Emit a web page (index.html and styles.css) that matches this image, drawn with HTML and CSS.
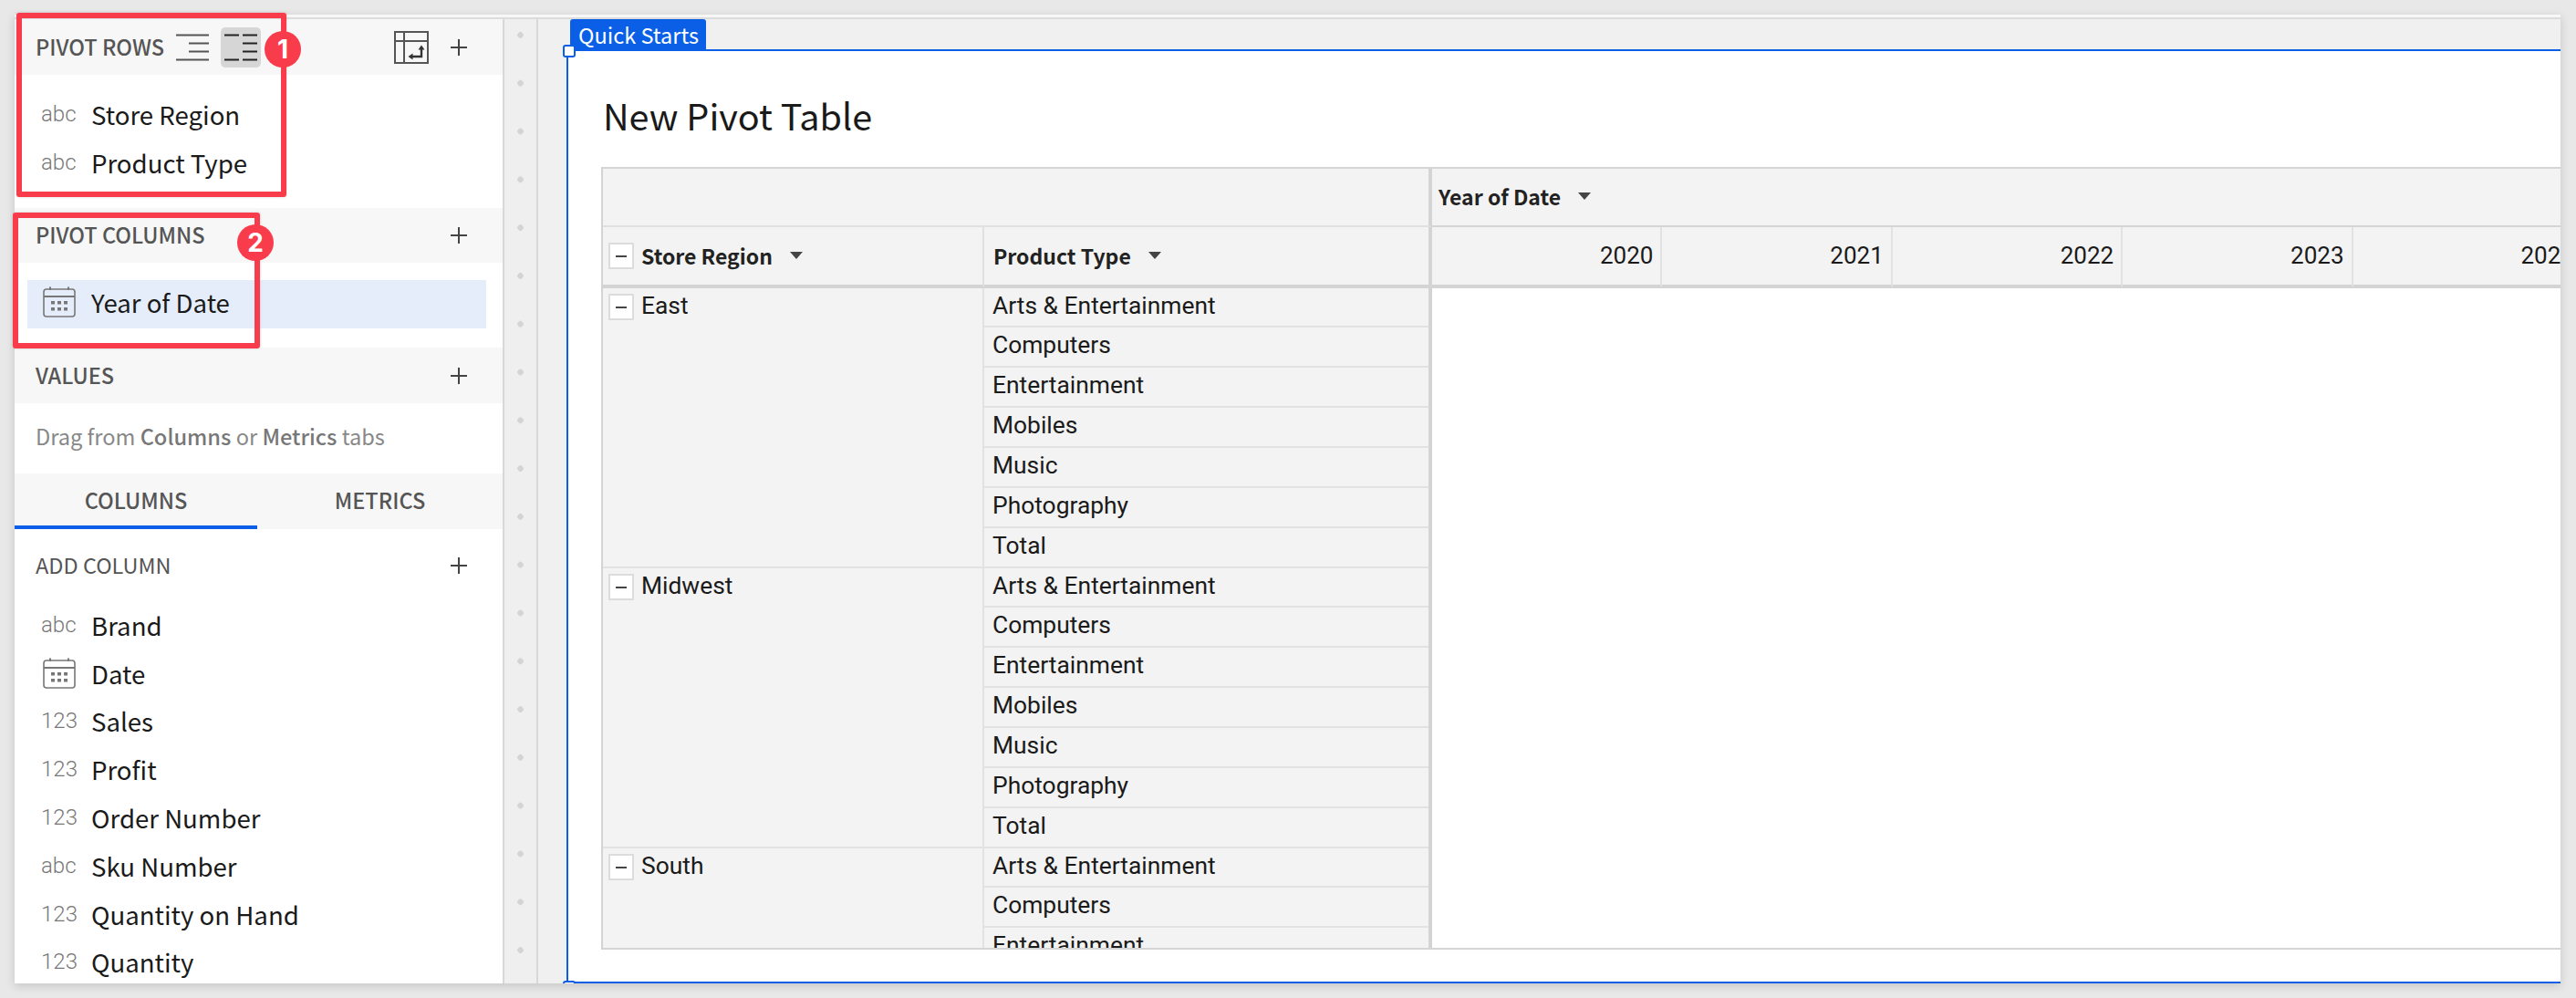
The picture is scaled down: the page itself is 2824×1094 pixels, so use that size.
FILE: index.html
```html
<!DOCTYPE html>
<html lang="en">
<head>
    <meta charset="UTF-8">
    <title>New Pivot Table</title>
    <link rel="stylesheet" href="styles.css">
</head>
<body>
    <div class="app">
        <div class="workspace">
            <aside class="panel">
                <div class="section-head">
                    <span class="section-title">PIVOT ROWS</span>
                    <svg class="layout-icon" width="36" height="30" viewBox="0 0 36 30"><path d="M0 1.500H36M14 10.500H36M14 19.500H36M0 28.500H36" stroke="#555" stroke-width="2"/></svg>
                    <span class="layout-btn">
                        <svg width="36" height="30" viewBox="0 0 36 30"><path d="M0 1.500H16M20 1.500H36M20 10.500H36M20 19.500H36M0 28.500H16M20 28.500H36" stroke="#222" stroke-width="2"/></svg>
                    </span>
                    <svg class="table-icon" width="38" height="36" viewBox="0 0 38 36"><path d="M1 1H37V35H1ZM1 11H37M11 1V35" fill="none" stroke="#555" stroke-width="2"/><path d="M30 19V28H19" fill="none" stroke="#333" stroke-width="2.400"/><path d="M30 15.500l-3.500 5h7ZM15.500 28l5-3.500v7Z" fill="#333"/></svg>
                    <svg class="plus" width="18" height="18" viewBox="0 0 18 18"><path d="M9 0V18M0 9H18" stroke="#444" stroke-width="2"/></svg>
                </div>
                <div class="section-body">
                    <div class="field"><span class="type">abc</span>Store Region</div>
                    <div class="field"><span class="type">abc</span>Product Type</div>
                </div>
                <div class="section-head head-b">
                    <span class="section-title">PIVOT COLUMNS</span>
                    <svg class="plus" width="18" height="18" viewBox="0 0 18 18"><path d="M9 0V18M0 9H18" stroke="#444" stroke-width="2"/></svg>
                </div>
                <div class="section-body">
                    <div class="field field-selected">
                        <svg class="type-cal" width="36" height="34" viewBox="0 0 36 34"><use href="#cal"/></svg>Year of Date
                    </div>
                </div>
                <div class="section-head">
                    <span class="section-title">VALUES</span>
                    <svg class="plus" width="18" height="18" viewBox="0 0 18 18"><path d="M9 0V18M0 9H18" stroke="#444" stroke-width="2"/></svg>
                </div>
                <div class="hint">Drag from <b>Columns</b> or <b>Metrics</b> tabs</div>
                <div class="tabs">
                    <div class="tab tab-active">COLUMNS</div>
                    <div class="tab">METRICS</div>
                </div>
                <div class="add-column">
                    <span class="add-label">ADD COLUMN</span>
                    <svg class="plus" width="18" height="18" viewBox="0 0 18 18"><path d="M9 0V18M0 9H18" stroke="#444" stroke-width="2"/></svg>
                </div>
                <div class="field-list">
                    <div class="field"><span class="type">abc</span>Brand</div>
                    <div class="field"><svg class="type-cal" width="36" height="34" viewBox="0 0 36 34"><use href="#cal"/></svg>Date</div>
                    <div class="field"><span class="type">123</span>Sales</div>
                    <div class="field"><span class="type">123</span>Profit</div>
                    <div class="field"><span class="type">123</span>Order Number</div>
                    <div class="field"><span class="type">abc</span>Sku Number</div>
                    <div class="field"><span class="type">123</span>Quantity on Hand</div>
                    <div class="field"><span class="type">123</span>Quantity</div>
                </div>
            </aside>
            <div class="ruler"></div>
            <main class="canvas">
                <div class="tag">Quick Starts</div>
                <section class="widget">
                    <span class="handle handle-top"></span>
                    <span class="handle handle-bottom"></span>
                    <h1 class="widget-title">New Pivot Table</h1>
                    <div class="pivot">
                        <div class="pivot-head">
                            <div class="cell corner"></div>
                            <div class="cell year-title">Year of Date<i class="caret"></i></div>
                            <div class="cell head-name region-col"><span class="toggle"></span>Store Region<i class="caret"></i></div>
                            <div class="cell head-name type-col">Product Type<i class="caret"></i></div>
                            <div class="cell year">2020</div>
                            <div class="cell year">2021</div>
                            <div class="cell year">2022</div>
                            <div class="cell year">2023</div>
                            <div class="cell year">2024</div>
                        </div>
                        <div class="pivot-body">
                            <div class="row-heads">
                                <div class="group">
                                    <div class="group-name"><span class="toggle"></span>East</div>
                                    <div class="group-items">
                                        <div>Arts &amp; Entertainment</div><div>Computers</div><div>Entertainment</div><div>Mobiles</div><div>Music</div><div>Photography</div><div>Total</div>
                                    </div>
                                </div>
                                <div class="group">
                                    <div class="group-name"><span class="toggle"></span>Midwest</div>
                                    <div class="group-items">
                                        <div>Arts &amp; Entertainment</div><div>Computers</div><div>Entertainment</div><div>Mobiles</div><div>Music</div><div>Photography</div><div>Total</div>
                                    </div>
                                </div>
                                <div class="group">
                                    <div class="group-name"><span class="toggle"></span>South</div>
                                    <div class="group-items">
                                        <div>Arts &amp; Entertainment</div><div>Computers</div><div>Entertainment</div>
                                    </div>
                                </div>
                            </div>
                            <div class="pivot-values"></div>
                        </div>
                    </div>
                </section>
            </main>
        </div>

        <div class="callout callout-rows"></div>
        <div class="callout callout-cols"></div>
        <div class="badge badge-rows">1</div>
        <div class="badge badge-cols">2</div>
    </div>

    <svg width="0" height="0" class="defs">
        <symbol id="cal" viewBox="0 0 36 34">
            <rect x="1" y="3" width="34" height="30" rx="3" fill="none" stroke="#777" stroke-width="1.600"/>
            <path d="M1 11H35M8 0.500V4M28 0.500V4" stroke="#777" stroke-width="2" fill="none"/>
            <path d="M9 16h4v3.500H9zM16 16h4v3.500h-4zM23 16h4v3.500h-4zM9 23h4v3.500H9zM16 23h4v3.500h-4zM23 23h4v3.500h-4z" fill="#777"/>
        </symbol>
    </svg>
</body>
</html>
```

FILE: styles.css
```css
html, body {
    margin: 0;
    padding: 0;
    height: 100%;
    overflow: hidden;
}
body {
    background: #e8e8e8;
    font-family: "Noto Sans CJK SC", "Noto Sans", sans-serif;
    color: #1a1a1a;
}
.defs {
    position: absolute;
}
.app {
    position: relative;
    margin: 16px 0 0 16px;
    width: 2791px;
    height: 1062px;
    padding-top: 3px;
    box-sizing: border-box;
    background: #f7f7f7;
    box-shadow: 0 3px 10px rgba(0, 0, 0, 0.15);
    display: flex;
    flex-direction: column;
}
.workspace {
    flex: 1;
    min-height: 0;
    display: flex;
    border-top: 2px solid #dcdcdc;
}

/* left panel */
.panel {
    width: 537px;
    flex: none;
    box-sizing: border-box;
    background: #fff;
    border-right: 2px solid #d8d8d8;
    overflow: hidden;
    display: flex;
    flex-direction: column;
}
.section-head {
    height: 61px;
    flex: none;
    box-sizing: border-box;
    padding: 0 39px 0 23px;
    background: #f7f7f7;
    display: flex;
    align-items: center;
}
.head-b {
    height: 60px;
}
.section-title {
    font-size: 23.500px;
    font-weight: 500;
    color: #555;
    padding-bottom: 2px;
}
.plus {
    margin-left: auto;
}
.layout-icon {
    margin-left: 13px;
}
.layout-btn {
    margin-left: 13px;
    width: 44px;
    height: 44px;
    background: #d6d6d6;
    border-radius: 5px;
    display: flex;
    align-items: center;
    justify-content: center;
}
.table-icon {
    margin-left: auto;
}
.table-icon + .plus {
    margin-left: 24px;
}
.section-body {
    padding: 19px 0 21.500px;
}
.field {
    height: 52.800px;
    box-sizing: border-box;
    display: flex;
    align-items: center;
    padding-left: 29px;
    padding-bottom: 4px;
    font-size: 27.600px;
    color: #1a1a1a;
}
.field-selected {
    margin: 0 18px 0 14px;
    padding-left: 15px;
    background: #e6edfa;
}
.type {
    width: 55px;
    flex: none;
    font-family: Roboto, sans-serif;
    font-weight: 300;
    font-size: 24px;
    color: #777;
}
.type-cal {
    width: 36px;
    margin: 0 17px 0 2px;
    flex: none;
}
.field-selected .type-cal {
    margin-right: 17px;
}
.hint {
    height: 77px;
    flex: none;
    box-sizing: border-box;
    padding: 0 23px 6px;
    display: flex;
    align-items: center;
    white-space: pre;
    font-size: 23.600px;
    color: #888;
}
.hint b {
    font-weight: 500;
    color: #777;
}
.tabs {
    height: 61px;
    flex: none;
    background: #f7f7f7;
    display: flex;
}
.tab {
    flex: 1;
    box-sizing: border-box;
    display: flex;
    align-items: center;
    justify-content: center;
    padding-bottom: 3px;
    font-size: 23.500px;
    font-weight: 500;
    color: #555;
}
.tab-active {
    border-bottom: 4px solid #0a5fe6;
    flex: none;
    width: 266px;
    padding-bottom: 0;
}
.add-column {
    height: 80px;
    flex: none;
    box-sizing: border-box;
    padding: 0 39px 0 23px;
    display: flex;
    align-items: center;
    font-size: 23.500px;
    color: #555;
}
.add-label {
    padding-bottom: 3px;
}
.field-list {
    flex: 1;
    min-height: 0;
    overflow: hidden;
}

/* ruler */
.ruler {
    width: 35px;
    flex: none;
    background-color: #efefef;
    background-image: radial-gradient(circle, #d4d4d4 3px, transparent 3.500px);
    background-size: 100% 52.800px;
    background-position: 0 -9px;
    border-right: 2px solid #d8d8d8;
}

/* canvas */
.canvas {
    flex: 1;
    min-width: 0;
    background: #f0f0f0;
    padding-left: 31px;
    display: flex;
    flex-direction: column;
    overflow: hidden;
}
.tag {
    align-self: flex-start;
    margin-left: 4px;
    height: 33px;
    padding: 0 8px 0 9px;
    background: #0a5fe6;
    color: #fff;
    font-size: 23.500px;
    line-height: 34px;
    border-radius: 3px 3px 0 0;
}
.widget {
    position: relative;
    flex: 1;
    min-height: 0;
    background: #fff;
    border-top: 2.500px solid #0a5fe6;
    border-bottom: 2px solid #0a5fe6;
    border-left: 2px solid #0a5fe6;
    padding-left: 36px;
    display: flex;
    flex-direction: column;
}
.handle {
    position: absolute;
    left: -6px;
    width: 10px;
    height: 10px;
    background: #fff;
    border: 2px solid #0a5fe6;
    border-radius: 3px;
}
.handle-top {
    top: -7px;
}
.handle-bottom {
    bottom: -9px;
    height: 6px;
}
.widget-title {
    margin: 0;
    height: 126.500px;
    box-sizing: border-box;
    padding: 41px 0 0 2px;
    font-size: 39.600px;
    font-weight: 400;
    line-height: 58px;
    color: #1a1a1a;
}

/* pivot table */
.pivot {
    height: 858px;
    box-sizing: border-box;
    border-top: 2px solid #d4d4d4;
    border-left: 2px solid #d4d4d4;
    border-bottom: 2px solid #d4d4d4;
    overflow: hidden;
    display: flex;
    flex-direction: column;
}
.pivot-head {
    flex: none;
    display: grid;
    grid-template-columns: 418px 491px repeat(5, 252.400px);
    grid-template-rows: 64px 67px;
    background: #f3f3f3;
}
.cell {
    box-sizing: border-box;
    display: flex;
    align-items: center;
    white-space: nowrap;
}
.corner {
    grid-column: 1 / 3;
    border-bottom: 2px solid #e0e0e0;
    border-right: 4.500px solid #d4d4d4;
}
.year-title {
    grid-column: 3 / 8;
    padding-left: 7px;
    padding-bottom: 2px;
    font-size: 23px;
    font-weight: 600;
    color: #222;
    border-bottom: 2px solid #d4d4d4;
}
.head-name {
    font-size: 23px;
    font-weight: 600;
    color: #222;
    border-bottom: 4px solid #d4d4d4;
    padding-left: 10px;
}
.region-col {
    padding-left: 6px;
    border-right: 2px solid #e0e0e0;
}
.type-col {
    border-right: 4.500px solid #d4d4d4;
}
.year {
    justify-content: flex-end;
    padding-right: 8px;
    font-family: Roboto, sans-serif;
    font-size: 26px;
    border-bottom: 4px solid #d4d4d4;
    border-right: 2px solid #e2e2e2;
}
.caret {
    margin-left: 19px;
    width: 0;
    height: 0;
    border-left: 7px solid transparent;
    border-right: 7px solid transparent;
    border-top: 8px solid #444;
}
.toggle {
    position: relative;
    flex: none;
    box-sizing: border-box;
    width: 28px;
    height: 29px;
    margin-right: 8px;
    background: #fff;
    border: 2px solid #dcdcdc;
}
.toggle::after {
    content: "";
    position: absolute;
    left: 6px;
    right: 6px;
    top: 12px;
    height: 2px;
    background: #444;
}
.pivot-body {
    flex: 1;
    min-height: 0;
    display: flex;
    font-family: Roboto, sans-serif;
    font-size: 26.400px;
    color: #1a1a1a;
}
.row-heads {
    width: 909px;
    flex: none;
    background: #f3f3f3;
    border-right: 4.500px solid #d4d4d4;
    box-sizing: border-box;
}
.group {
    display: flex;
    border-bottom: 2px solid #e2e2e2;
}
.group-name {
    width: 418px;
    flex: none;
    box-sizing: border-box;
    padding: 6px 0 0 6px;
    display: flex;
    align-items: flex-start;
    line-height: 26px;
    border-right: 2px solid #e2e2e2;
}
.group-items {
    flex: 1;
}
.group-items div {
    box-sizing: border-box;
    height: 43.860px;
    padding-left: 9px;
    line-height: 38px;
    border-bottom: 2px solid #e2e2e2;
}
.group-items div:last-child {
    border-bottom: none;
    height: 41.860px;
}
.pivot-values {
    flex: 1;
    background: #fff;
}

/* annotations */
.callout {
    position: absolute;
    box-sizing: border-box;
    border: 6px solid #f93c4b;
    border-radius: 3px;
    box-shadow: 0 0 3px rgba(0, 0, 0, 0.15);
}
.callout-rows {
    left: 2px;
    top: -2px;
    width: 296px;
    height: 202px;
}
.callout-cols {
    left: -2px;
    top: 217px;
    width: 271px;
    height: 149px;
}
.badge {
    position: absolute;
    width: 40px;
    height: 40px;
    border-radius: 50%;
    background: #f93c4b;
    color: #fff;
    font-family: Inter, sans-serif;
    font-weight: 700;
    font-size: 28px;
    line-height: 40px;
    text-align: center;
}
.badge-rows {
    left: 274px;
    top: 18px;
}
.badge-cols {
    left: 244px;
    top: 230px;
}
```
